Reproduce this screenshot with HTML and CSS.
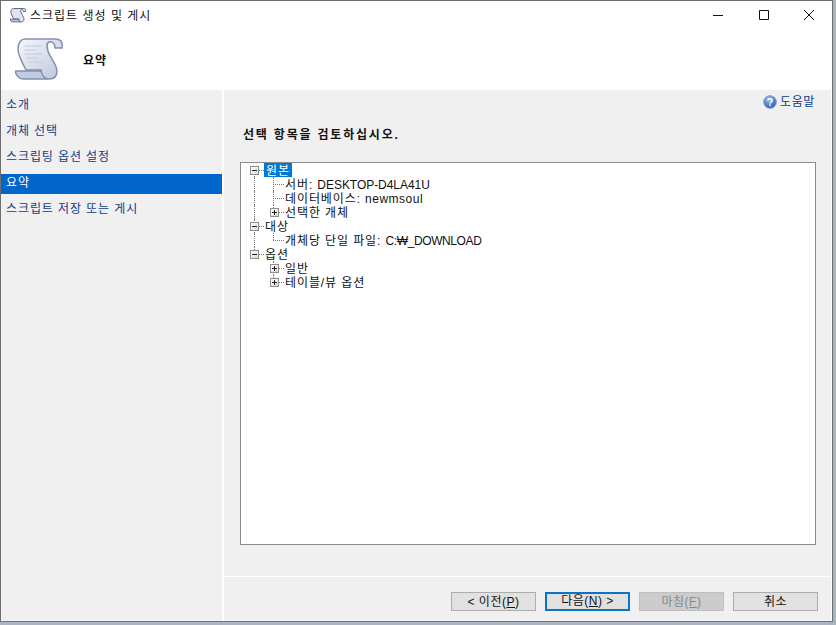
FILE: index.html
```html
<!DOCTYPE html>
<html lang="ko">
<head>
<meta charset="utf-8">
<title>스크립트 생성 및 게시</title>
<link rel="stylesheet" href="styles.css">
</head>
<body>
<div class="window">
  <div class="titlebar">
    <svg class="title-icon" width="16" height="15" viewBox="0 0 48 44">
      <path d="M0 33H26C27 37 29 40 33 41H8C4 41 1 37 0 33z" fill="#c3cbe0" stroke="#5f6b85" stroke-width="3"/>
      <path d="M10 1H40C46 1 48 4 47 10H40C40 5 37 3 34 4C31 5 32 9 33 13C35 20 42 26 42 33C42 39 38 41 34 41C30 41 27 38 26 32H11C7 24 3 18 3 11C3 5 6 1 10 1z" fill="#dfe3ee" stroke="#5f6b85" stroke-width="3"/>
    </svg>
    <span class="title-text">스크립트 생성 및 게시</span>
    <div class="controls">
      <svg width="12" height="12" viewBox="0 0 12 12"><path d="M1 6.500h10" stroke="#111" fill="none"/></svg>
      <svg width="12" height="12" viewBox="0 0 12 12"><path d="M1.500 1.500h9v9h-9z" stroke="#111" fill="none"/></svg>
      <svg width="12" height="12" viewBox="0 0 12 12"><path d="M1 1l10 10M11 1L1 11" stroke="#111" fill="none"/></svg>
    </div>
  </div>
  <div class="header">
    <svg class="scroll" width="48" height="44" viewBox="0 0 48 44">
      <defs><linearGradient id="sg" x1="0" y1="0" x2="1" y2="1"><stop offset="0" stop-color="#f6f7fb"/><stop offset="1" stop-color="#bcc5dc"/></linearGradient></defs>
      <path d="M0 33H26C27 37 29 40 33 41H8C4 41 1 37 0 33z" fill="#c3cbe0" stroke="#8490b0" stroke-width="1.500"/>
      <path d="M10 1H40C46 1 48 4 47 10H40C40 5 37 3 34 4C31 5 32 9 33 13C35 20 42 26 42 33C42 39 38 41 34 41C30 41 27 38 26 32H11C7 24 3 18 3 11C3 5 6 1 10 1z" fill="url(#sg)" stroke="#8490b0" stroke-width="1.500"/>
      <path d="M10 8H27M9 12H21M10 16H27M11 20H23M13 24H28" stroke="#c4cad9" fill="none"/>
    </svg>
    <span class="header-title">요약</span>
  </div>
  <div class="main">
    <nav class="sidebar">
      <a class="nav-item">소개</a>
      <a class="nav-item">개체 선택</a>
      <a class="nav-item">스크립팅 옵션 설정</a>
      <a class="nav-item active">요약</a>
      <a class="nav-item">스크립트 저장 또는 게시</a>
    </nav>
    <section class="content">
      <div class="help">
        <svg width="14" height="14" viewBox="0 0 14 14"><defs><radialGradient id="hg" cx=".4" cy=".3" r=".8"><stop offset="0" stop-color="#9cc0f0"/><stop offset="1" stop-color="#1d4fa6"/></radialGradient></defs><circle cx="7" cy="7" r="6.300" fill="url(#hg)" stroke="#7f9cc8"/><path d="M5 5.400c0-2.200 4.200-2.200 4.200 0 0 1.600-2 1.500-2 3" stroke="#fff" stroke-width="1.500" fill="none"/><path d="M6.400 9.500h1.600v1.600H6.400z" fill="#fff"/></svg>
        <span>도움말</span>
      </div>
      <h2 class="prompt">선택 항목을 검토하십시오.</h2>
      <div class="tree">
        <div class="row l0 first"><span class="box minus"></span><span class="dash"></span><span class="label sel">원본</span></div>
        <div class="row l1"><span class="leaf"></span><span class="label">서버: <span class="lat">DESKTOP-D4LA41U</span></span></div>
        <div class="row l1"><span class="leaf"></span><span class="label">데이터베이스: <span class="lat wide">newmsoul</span></span></div>
        <div class="row l1b last"><span class="box plus"></span><span class="dash"></span><span class="label">선택한 개체</span></div>
        <div class="row l0"><span class="box minus"></span><span class="dash"></span><span class="label">대상</span></div>
        <div class="row l1 last"><span class="leaf"></span><span class="label">개체당 단일 파일: <span class="lat tight">C:₩_DOWNLOAD</span></span></div>
        <div class="row l0 bottom"><span class="box minus"></span><span class="dash"></span><span class="label">옵션</span></div>
        <div class="row l1b end"><span class="box plus"></span><span class="dash"></span><span class="label">일반</span></div>
        <div class="row l1b end last"><span class="box plus"></span><span class="dash"></span><span class="label">테이블/뷰 옵션</span></div>
      </div>
      <div class="footer">
        <button class="btn">&lt; 이전(<u>P</u>)</button>
        <button class="btn default">다음(<u>N</u>) &gt;</button>
        <button class="btn disabled">마침(<u>F</u>)</button>
        <button class="btn">취소</button>
      </div>
    </section>
  </div>
</div>
</body>
</html>
```
FILE: styles.css
```css
* { box-sizing: border-box; }
html, body { margin: 0; height: 100%; }
body {
  background: #aab3c2;
  font-family: "Liberation Sans", "Noto Sans CJK KR", sans-serif;
  font-size: 12px;
  color: #111;
  overflow: hidden;
}
.window {
  width: 833px;
  height: 622px;
  background: #fff;
  border: 1px solid #6e6e6e;
  border-bottom-color: #777;
  display: flex;
  flex-direction: column;
}
.titlebar {
  height: 29px;
  display: flex;
  align-items: center;
  padding-left: 9px;
  flex: none;
}
.title-icon { margin-right: 4px; }
.title-text { letter-spacing: 1px; margin-bottom: 2px; }
.controls {
  margin-left: auto;
  display: flex;
  gap: 33.5px;
  padding-right: 17px;
  margin-bottom: 2px;
}
.header {
  height: 60px;
  flex: none;
  display: flex;
  align-items: center;
  padding-left: 14px;
}
.scroll { flex: none; }
.header-title {
  font-weight: 700;
  margin-left: 20px;
  margin-bottom: 2px;
  letter-spacing: 1px;
}
.main { flex: 1; display: flex; min-height: 0; }
.sidebar {
  width: 221px;
  flex: none;
  background: #f0f0f0;
  padding-top: 6px;
  margin-right: 2px;
  display: flex;
  flex-direction: column;
  gap: 6px;
}
.nav-item {
  height: 20px;
  line-height: 19px;
  padding-left: 5px;
  color: #0b3c8c;
  letter-spacing: 0.9px;
}
.nav-item.active { background: #0066cc; color: #fff; }
.content {
  flex: 1;
  background: #f0f0f0;
  border-right: 1px solid #fff;
  display: flex;
  flex-direction: column;
  min-width: 0;
}
.help {
  height: 20px;
  display: flex;
  justify-content: flex-end;
  align-items: center;
  gap: 3px;
  padding-right: 16px;
  color: #0b3c8c;
  letter-spacing: 0.6px;
}
.help svg { margin-top: 3px; }
.prompt {
  margin: 15px 0 0 19px;
  font-size: 12px;
  font-weight: 700;
  line-height: 20px;
  letter-spacing: 1.8px;
}
.tree {
  margin: 17px 15px 0 16px;
  height: 383px;
  background: #fff;
  border: 1px solid #8a8a8a;
  flex: none;
}
.row {
  height: 14px;
  display: flex;
  align-items: center;
  position: relative;
  letter-spacing: 0.9px;
}
.l0 { padding-left: 9px; }
.l1, .l1b { padding-left: 29px; }
.row::before {
  content: "";
  position: absolute;
  left: 13px;
  top: 0;
  height: 14px;
  border-left: 1px dotted #777;
}
.row.first::before { top: 7px; height: 7px; }
.row.bottom::before { height: 7px; }
.row.end::before { display: none; }
.l1::after, .l1b::after {
  content: "";
  position: absolute;
  left: 32px;
  top: 0;
  height: 14px;
  border-left: 1px dotted #777;
}
.row.last::after { height: 7px; }
.box {
  width: 9px;
  height: 9px;
  border: 1px solid #8f8f8f;
  background: linear-gradient(135deg, #fff, #d8d8d8);
  position: relative;
  z-index: 1;
  flex: none;
}
.box::before {
  content: "";
  position: absolute;
  left: 1px;
  top: 3px;
  width: 5px;
  height: 1px;
  background: #222;
}
.plus::after {
  content: "";
  position: absolute;
  left: 3px;
  top: 1px;
  width: 1px;
  height: 5px;
  background: #222;
}
.dash {
  width: 5px;
  border-top: 1px dotted #777;
  flex: none;
}
.leaf {
  width: 11px;
  margin-left: 3px;
  border-top: 1px dotted #777;
  flex: none;
}
.label { height: 14px; line-height: 16px; padding: 0 1px; white-space: nowrap; }
.lat { letter-spacing: -0.05px; }
.lat.wide { letter-spacing: 0.5px; }
.lat.tight { letter-spacing: -0.4px; }
.sel { background: #0078d7; color: #fff; padding: 0 2px; }
.footer {
  margin-top: 31px;
  border-top: 1px solid #fff;
  flex: 1;
  display: flex;
  justify-content: flex-end;
  align-items: flex-start;
  gap: 9px;
  padding: 15px 13px 0 0;
}
.btn {
  width: 85px;
  height: 19px;
  padding: 1px 0 0;
  font: inherit;
  line-height: 15px;
  color: #111;
  background: #e1e1e1;
  border: 1px solid #adadad;
  letter-spacing: 0.5px;
}
.btn.default { border: 2px solid #0f73c4; padding-top: 0; }
.btn.disabled { background: #cccccc; border-color: #bfbfbf; color: #8a8a8a; }
```
